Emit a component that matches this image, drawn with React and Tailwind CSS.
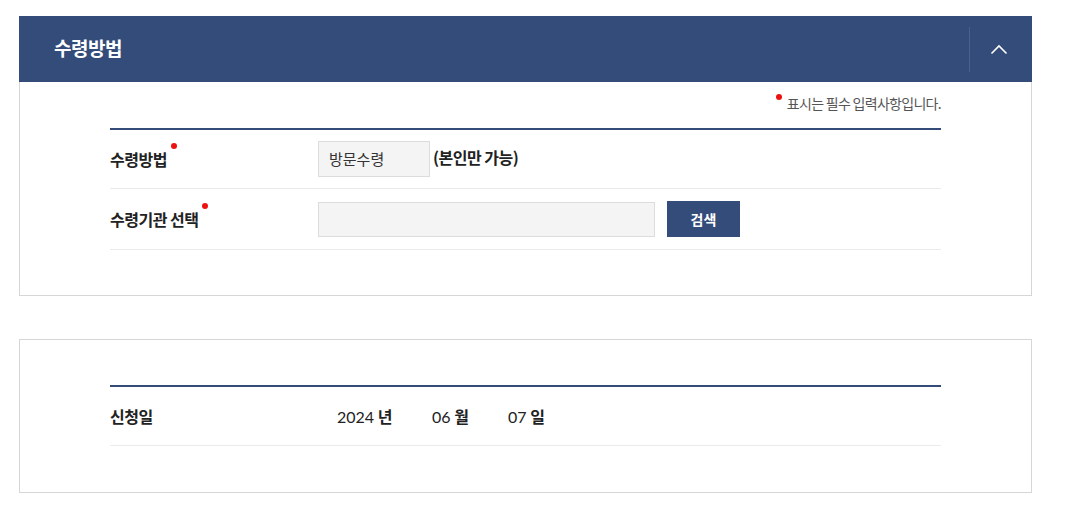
import React from 'react';

const font = { fontFamily: '"Noto Sans CJK KR", "Noto Sans", sans-serif' };

function Dot() {
  return <span className="absolute -right-[10px] -top-[4px] w-[6px] h-[6px] rounded-full bg-[#ee1111]" />;
}

function App() {
  return (
    <div className="w-[1068px] min-h-[529px] bg-white pt-4 pl-[19px]" style={font}>
      <div className="w-[1013px]">
        <div className="h-[66px] bg-[#344c79] flex items-center">
          <h2 className="flex-1 pl-[35px] text-white text-[19px] font-bold tracking-[-0.5px] -mt-[1px]">수령방법</h2>
          <div className="w-px h-[45px] bg-[#4a6190]" />
          <button className="w-[58px] h-full flex items-center justify-center text-white">
            <svg width="18" height="11" viewBox="0 0 18 11" fill="none">
              <path d="M1.5 9.5 L9 2 L16.5 9.5" stroke="white" strokeWidth="1.6" />
            </svg>
          </button>
          <div className="w-[4px]" />
        </div>
        <div className="border border-t-0 border-[#d6d6d6] h-[214px] pl-[90px] pr-[90px]">
          <p className="text-right text-[14px] text-[#555] pt-[11px] h-[46px] tracking-[-0.7px]">
            <span className="relative inline-block">
              <span className="absolute -left-[11px] top-[1px] w-[6px] h-[6px] rounded-full bg-[#ee1111]" />
              표시는 필수 입력사항입니다.
            </span>
          </p>
          <div className="border-t-2 border-[#344c79]">
            <div className="h-[59px] flex items-center border-b border-[#eaeaea]">
              <div className="w-[208px] text-[16px] font-bold text-[#222] tracking-[-0.5px]">
                <span className="relative">수령방법<Dot /></span>
              </div>
              <div className="w-[112px] h-[36px] bg-[#f4f4f4] border border-[#dcdcdc] flex items-center pl-[10px] text-[15px] text-[#333]">방문수령</div>
              <span className="ml-[3px] text-[16px] font-bold text-[#222] tracking-[-0.5px] -mt-[5px]">(본인만 가능)</span>
            </div>
            <div className="h-[61px] flex items-center border-b border-[#eaeaea]">
              <div className="w-[208px] text-[16px] font-bold text-[#222] tracking-[-0.5px]">
                <span className="relative">수령기관 선택<Dot /></span>
              </div>
              <div className="w-[337px] h-[35px] bg-[#f4f4f4] border border-[#dcdcdc]" />
              <button className="ml-3 w-[73px] h-[36px] bg-[#344c79] text-white text-[14px] font-bold">검색</button>
            </div>
          </div>
        </div>
        <div className="mt-[43px] border border-[#d6d6d6] h-[154px] px-[90px] pt-[45px]">
          <div className="border-t-2 border-[#344c79]">
            <div className="h-[59px] flex items-center border-b border-[#eaeaea] text-[16px] text-[#222]">
              <div className="w-[227px] font-bold tracking-[-0.5px]">신청일</div>
              <span className="w-[95px]"><span style={{ fontFamily: 'Lato, sans-serif' }}>2024</span> <b>년</b></span>
              <span className="w-[76px]"><span style={{ fontFamily: 'Lato, sans-serif' }}>06</span> <b>월</b></span>
              <span><span style={{ fontFamily: 'Lato, sans-serif' }}>07</span> <b>일</b></span>
            </div>
          </div>
        </div>
      </div>
    </div>
  );
}

export default App;
